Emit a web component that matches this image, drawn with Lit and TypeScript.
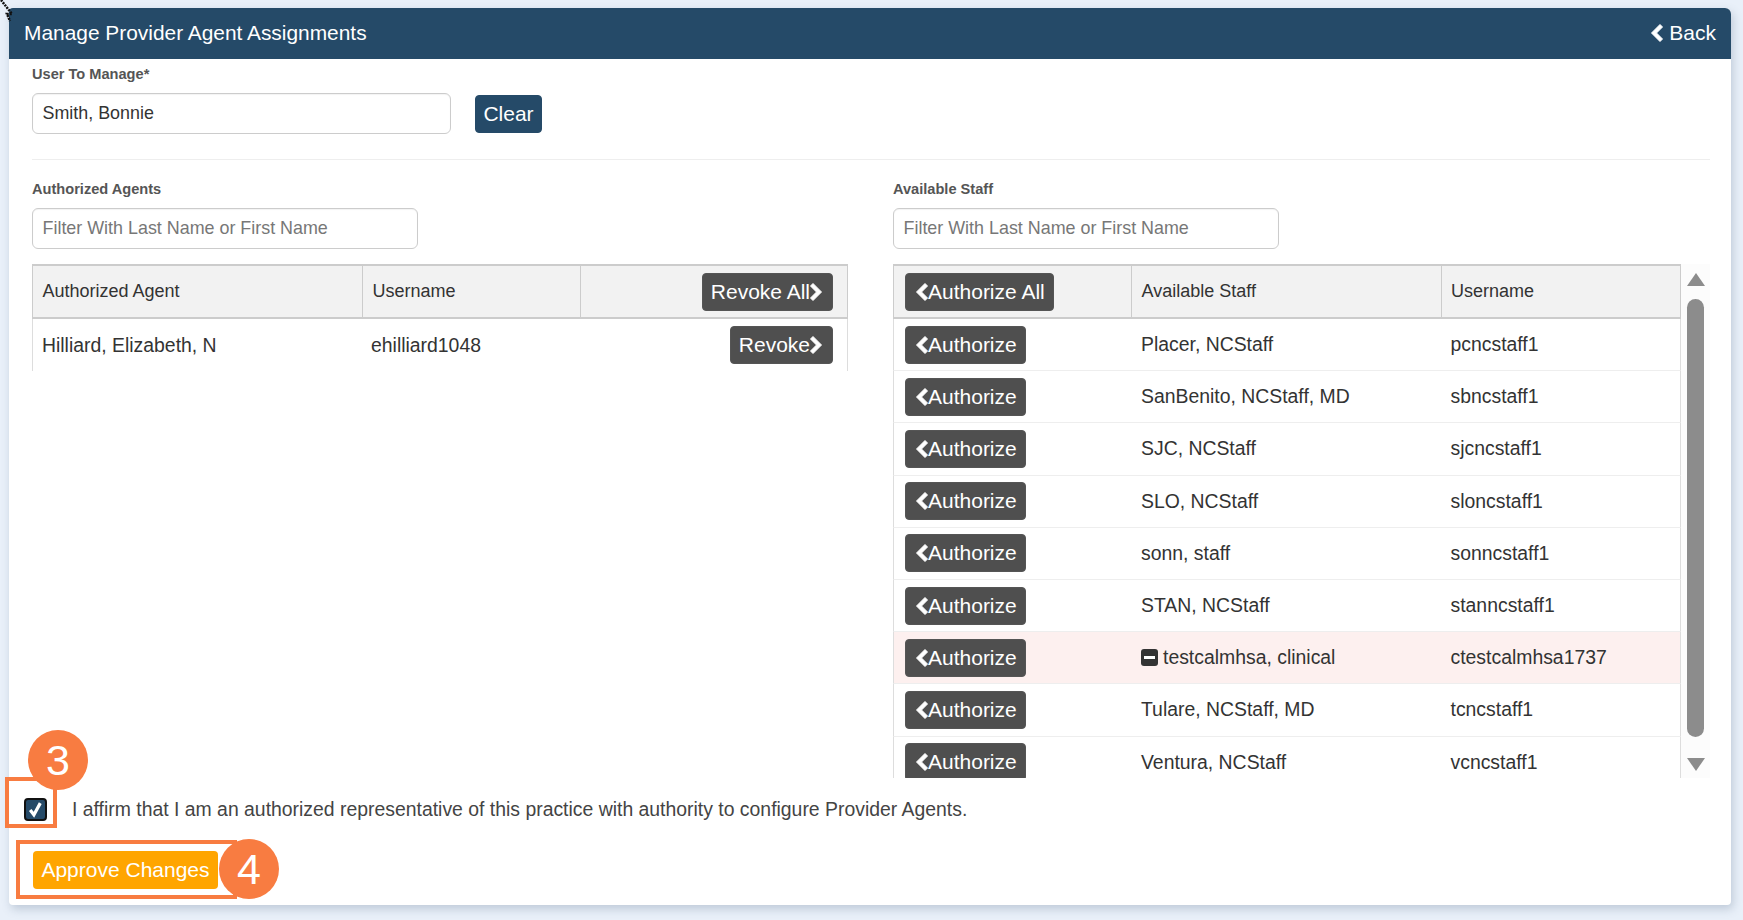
import { LitElement, html, css, svg } from "lit";
import { customElement } from "lit/decorators.js";

const left = () => svg`<svg class="chev" viewBox="0 0 14 20" width="14" height="20"><path d="M11 1.5 L13.5 4 L7.5 10 L13.5 16 L11 18.5 L2.5 10 Z" fill="#fff" stroke="#fff" stroke-width="1" stroke-linejoin="round"/></svg>`;
const right = () => svg`<svg class="chev" viewBox="0 0 14 20" width="14" height="20"><path d="M3 1.5 L.5 4 L6.5 10 L.5 16 L3 18.5 L11.5 10 Z" fill="#fff" stroke="#fff" stroke-width="1" stroke-linejoin="round"/></svg>`;

const staff: [string, string, boolean?][] = [
  ["Placer, NCStaff", "pcncstaff1"],
  ["SanBenito, NCStaff, MD", "sbncstaff1"],
  ["SJC, NCStaff", "sjcncstaff1"],
  ["SLO, NCStaff", "sloncstaff1"],
  ["sonn, staff", "sonncstaff1"],
  ["STAN, NCStaff", "stanncstaff1"],
  ["testcalmhsa, clinical", "ctestcalmhsa1737", true],
  ["Tulare, NCStaff, MD", "tcncstaff1"],
  ["Ventura, NCStaff", "vcncstaff1"],
];

@customElement("app-root")
export class AppRoot extends LitElement {
  static styles = css`
    :host { display: block; height: 920px; overflow: hidden; background: #e9f0f9; font-family: "Liberation Sans", Arial, sans-serif; color: #333; font-size: 18px; position: relative; }
    * { box-sizing: border-box; }
    .panel { margin: 8px 12px 0 9px; height: 897px; background: #fff; border-radius: 4px 6px 4px 4px; box-shadow: 2px 4px 10px rgba(80,100,130,.28); display: flex; flex-direction: column; position: relative; }
    .head { height: 51px; flex: none; background: #254a68; color: #fff; border-radius: 4px 6px 0 0; display: flex; align-items: center; justify-content: space-between; padding: 0 15px 2px 15px; font-size: 20.9px; }
    .back { display: flex; align-items: center; gap: 6px; font-size: 21px; }
    .body { flex: 1; padding: 0 21px 0 23px; display: flex; flex-direction: column; min-height: 0; }
    .lbl { font-size: 14.6px; font-weight: 700; color: #555; line-height: 16px; }
    .user { margin-top: 0; padding-top: 7px; }
    .urow { display: flex; align-items: center; gap: 24px; margin-top: 11px; }
    .inp { height: 41px; border: 1px solid #ccc; border-radius: 6px; padding: 0 9.5px; display: flex; align-items: center; font-size: 17.9px; box-shadow: inset 0 1px 1px rgba(0,0,0,.05); }
    .inp.u { width: 419px; color: #333; }
    .inp.f { width: 386px; color: #777; margin-top: 10.5px; }
    .btn { display: inline-flex; align-items: center; border-radius: 4px; color: #fff; background: #4f4f4f; height: 38px; font-size: 21px; border: 1px solid #555; white-space: nowrap; padding: 0 8px; }
    .clear { background: #254a68; border-color: #254a68; width: 67px; justify-content: center; padding: 0; }
    hr { border: 0; border-top: 1px solid #eee; margin: 25px 0 0; width: 100%; }
    .cols { display: flex; margin-top: 21px; }
    .lc { width: 861px; flex: none; }
    .rc { flex: 1; min-width: 0; }
    .tbl { margin-top: 15.5px; }
    .tr { display: grid; height: 52.2px; align-items: center; border-left: 1px solid #ddd; border-right: 1px solid #ddd; border-bottom: 1px solid #eee; }
    .th { background: #f2f2f2; border: 1px solid #ccc; border-top-width: 2px; border-bottom-width: 2px; height: 55px; }
    .th > div { height: 100%; display: flex; align-items: center; border-left: 1px solid #ccc; padding-left: 9.5px; font-size: 18px; }
    .th > div:first-child { border-left: 0; }
    .lg { width: 816px; grid-template-columns: 329px 218px 1fr; }
    .lg .act { justify-content: flex-end; padding-right: 14px; display: flex; }
    .lg.tr:not(.th) { border-bottom: 0; }
    .lg.tr:not(.th) > div { padding-left: 9px; font-size: 19.4px; }
    .rwrap { display: flex; margin-top: 15.5px; height: 514px; width: 817px; }
    .rt { width: 788px; flex: none; height: 514px; overflow: hidden; }
    .rg { grid-template-columns: 237px 309.5px 1fr; }
    .rt .tr:not(.th) > div { padding-left: 10px; font-size: 19.4px; }
    .rt .tr:not(.th) > div:first-child { padding-left: 11px; }
    .rt .tr.th > div:first-child { padding-left: 11px; }
    .rt .tr.hl { background: #fdf0ef; }
    .cellflex { display: flex; align-items: center; gap: 5px; }
    .minus { width: 17px; height: 17px; background: #333; border-radius: 3px; display: inline-flex; align-items: center; justify-content: center; }
    .minus i { display: block; width: 11px; height: 3px; background: #fff; }
    .sb { width: 29px; flex: none; background: #fcfcfc; display: flex; flex-direction: column; align-items: center; }
    .up { width: 0; height: 0; border-left: 9px solid transparent; border-right: 9px solid transparent; border-bottom: 13px solid #8c8c8c; margin-top: 9px; }
    .thumb { width: 17px; height: 438px; background: #8c8c8c; border-radius: 9px; margin-top: 13px; }
    .dn { width: 0; height: 0; border-left: 9px solid transparent; border-right: 9px solid transparent; border-top: 13px solid #8c8c8c; margin-top: 21px; }
    .affirm { display: flex; align-items: center; margin-top: 10px; height: 42px; font-size: 19.4px; color: #444; }
    .cb { width: 23px; height: 23px; margin-left: -8px; margin-right: 25px; background: #254a68; border: 2px solid #111; border-radius: 4px; display: flex; align-items: center; justify-content: center; flex: none; }
    .apprw { display: flex; margin-top: 21px; }
    .appr { background: #ffa500; border: 0; width: 185px; justify-content: center; margin-left: 1px; padding: 0; }
    .box { position: absolute; border: 4px solid #f87c41; }
    .b3 { left: -4px; top: 769px; width: 52px; height: 51px; }
    .b4 { left: 7px; top: 832px; width: 221px; height: 59px; }
    .num { position: absolute; width: 60px; height: 60px; border-radius: 50%; background: #f87c41; color: #fff; font-size: 43px; display: flex; align-items: center; justify-content: center; }
    .n3 { left: 19px; top: 722px; }
    .n4 { left: 210px; top: 831px; }
    .cursor { position: absolute; left: 0; top: 0; }
  `;

  render() {
    return html`
      <div class="panel">
        <div class="head"><span>Manage Provider Agent Assignments</span><span class="back">${left()}Back</span></div>
        <div class="body">
          <div class="user">
            <div class="lbl">User To Manage*</div>
            <div class="urow"><div class="inp u">Smith, Bonnie</div><div class="btn clear">Clear</div></div>
          </div>
          <hr />
          <div class="cols">
            <div class="lc">
              <div class="lbl">Authorized Agents</div>
              <div class="inp f">Filter With Last Name or First Name</div>
              <div class="tbl">
                <div class="tr th lg"><div>Authorized Agent</div><div>Username</div><div class="act"><span class="btn">Revoke All${right()}</span></div></div>
                <div class="tr lg"><div>Hilliard, Elizabeth, N</div><div>ehilliard1048</div><div class="act"><span class="btn">Revoke${right()}</span></div></div>
              </div>
            </div>
            <div class="rc">
              <div class="lbl">Available Staff</div>
              <div class="inp f">Filter With Last Name or First Name</div>
              <div class="rwrap">
                <div class="rt">
                  <div class="tr th rg"><div><span class="btn">${left()}Authorize All</span></div><div>Available Staff</div><div>Username</div></div>
                  ${staff.map(
                    ([n, u, hl]) => html`<div class="tr rg ${hl ? "hl" : ""}"><div><span class="btn">${left()}Authorize</span></div><div class="cellflex">${hl ? html`<span class="minus"><i></i></span>` : ""}${n}</div><div>${u}</div></div>`
                  )}
                </div>
                <div class="sb"><div class="up"></div><div class="thumb"></div><div class="dn"></div></div>
              </div>
            </div>
          </div>
          <div class="affirm"><span class="cb"><svg viewBox="0 0 16 16" width="17" height="17"><path d="M3 8.5 L6.5 13 L12.5 2" fill="none" stroke="#fff" stroke-width="3"/></svg></span>I affirm that I am an authorized representative of this practice with authority to configure Provider Agents.</div>
          <div class="apprw"><span class="btn appr">Approve Changes</span></div>
        </div>
        <div class="box b3"></div>
        <div class="box b4"></div>
        <div class="num n3">3</div>
        <div class="num n4">4</div>
      </div>
      <svg class="cursor" width="14" height="22" viewBox="0 0 14 22"><path d="M1 0 L12 14 L7 14 L10 21" fill="none" stroke="#111" stroke-width="2.5" stroke-dasharray="2 1"/></svg>
    `;
  }
}
